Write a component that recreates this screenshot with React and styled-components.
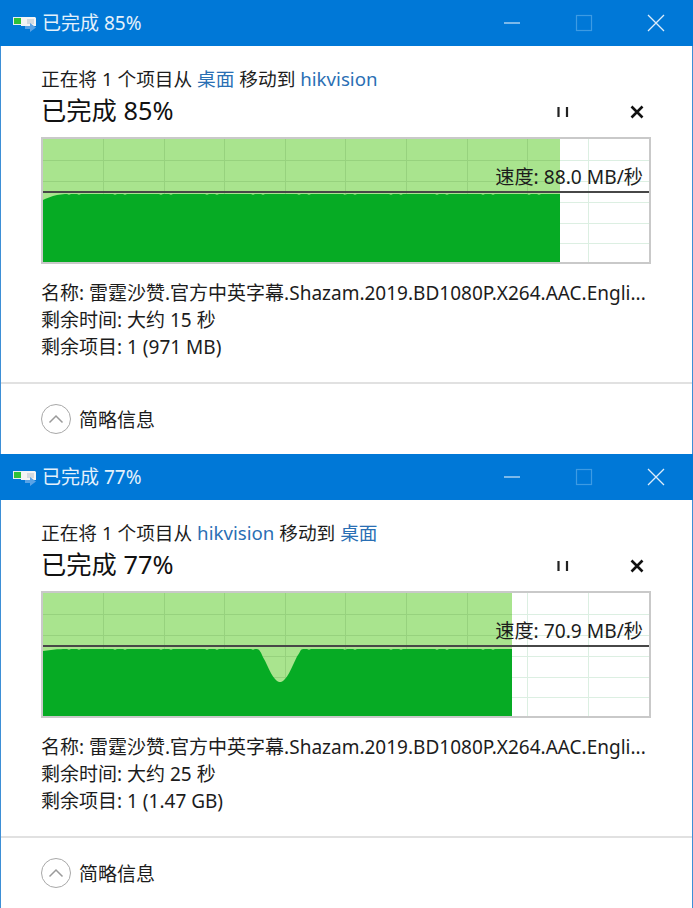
import React from "react";
import styled, { createGlobalStyle } from "styled-components";

const Global = createGlobalStyle`
  html, body { margin: 0; padding: 0; background: #fff; }
  * { box-sizing: border-box; }
  body { font-family: "Noto Sans", "Noto Sans CJK SC", sans-serif; color: #1c1c1c; }
`;

const Page = styled.div`
  width: 693px;
  display: flex;
  flex-direction: column;
`;

const Win = styled.section`
  height: 454px;
  display: flex;
  flex-direction: column;
  border-left: 1px solid #3d8fd6;
  border-right: 1px solid #3d8fd6;
`;

const TitleBar = styled.header`
  height: 46px;
  margin: 0 -1px;
  flex: none;
  display: flex;
  align-items: center;
  background: #0078d7;
  color: #e4f1fb;
  padding-left: 13px;
  font-size: 19px;
`;

const TitleText = styled.span`
  margin-left: 5px;
  margin-top: -2px;
  flex: 1;
`;

const CtrlButton = styled.div`
  width: 72px;
  height: 46px;
  display: flex;
  align-items: center;
  justify-content: center;
`;

const Controls = styled.div`
  display: flex;
  margin-right: 1px;
`;

const Body = styled.div`
  flex: 1;
  display: flex;
  flex-direction: column;
  padding: 19px 41px 0 40px;
`;

const Line = styled.div`
  font-size: 19px;
  line-height: 27px;
  height: 27px;
  white-space: nowrap;
`;

const Summary = styled(Line)`
  font-size: 18.7px;
`;

const Place = styled.span`
  color: #2a6fb4;
`;

const HeadRow = styled.div`
  margin-top: -1px;
  height: 36px;
  display: flex;
  align-items: center;
  justify-content: space-between;
`;

const Heading = styled.h1`
  margin: 0;
  font-size: 25.3px;
  font-weight: 400;
  color: #111;
`;

const Actions = styled.div`
  display: flex;
  gap: 50px;
  margin-right: 2px;
  padding-top: 5px;
`;

const Action = styled.div`
  width: 24px;
  height: 24px;
  display: flex;
  align-items: center;
  justify-content: center;
`;

const Chart = styled.div`
  position: relative;
  margin-top: 10px;
  width: 610px;
  height: 127px;
  border: 2px solid #c9c9c9;
  background: #fff;
`;

const ChartSvg = styled.svg`
  display: block;
`;

const SpeedLine = styled.div`
  position: absolute;
  left: 0;
  right: 0;
  top: ${(p) => p.$top}px;
  height: 2px;
  background: #474747;
`;

const SpeedLabel = styled.div`
  position: absolute;
  right: 6px;
  top: ${(p) => p.$top}px;
  font-size: 19.2px;
  line-height: 26px;
  color: #1c1c1c;
  white-space: nowrap;
`;

const Details = styled.div`
  margin-top: 16px;
  display: flex;
  flex-direction: column;
`;

const Footer = styled.div`
  height: 72px;
  flex: none;
  border-top: 2px solid #e1e1e1;
  display: flex;
  align-items: center;
  padding-left: 40px;
  gap: 8px;
`;

const FooterLabel = styled.span`
  font-size: 19px;
`;

const Toggle = styled.div`
  width: 30px;
  height: 30px;
  border: 1.5px solid #a8a8a8;
  border-radius: 50%;
  display: flex;
  align-items: center;
  justify-content: center;
  background: #fff;
`;

const AppIcon = () => (
  <svg width="24" height="18" viewBox="0 0 24 18">
    <rect x="0" y="3" width="10" height="8" fill="#e8eef0" />
    <rect x="1" y="4" width="7" height="6" fill="#2fc13a" />
    <path d="M8 3h14l1 1v8H8z" fill="#f4f4f4" />
    <path d="M14 5h7v5h-7z" fill="#d3dae0" />
    <path d="M12 12h5V9l6 4.5-6 4.5v-3h-5z" fill="#5aa3e6" />
  </svg>
);

const Minimize = () => (
  <svg width="18" height="18" viewBox="0 0 18 18">
    <path d="M1 9h16" stroke="#cfe5f7" strokeWidth="1.2" />
  </svg>
);
const Maximize = () => (
  <svg width="18" height="18" viewBox="0 0 18 18">
    <rect x="1.5" y="1.5" width="15" height="15" fill="none" stroke="#3d9be3" strokeWidth="1.2" />
  </svg>
);
const CloseWin = () => (
  <svg width="18" height="18" viewBox="0 0 18 18">
    <path d="M1 1l16 16M17 1L1 17" stroke="#dcedfb" strokeWidth="1.3" />
  </svg>
);
const Pause = () => (
  <svg width="14" height="14" viewBox="0 0 14 14">
    <path d="M2.5 2v10M11 2v10" stroke="#222" strokeWidth="2.2" />
  </svg>
);
const Stop = () => (
  <svg width="14" height="14" viewBox="0 0 14 14">
    <path d="M1.5 1.5l11 11M12.5 1.5l-11 11" stroke="#111" strokeWidth="2.6" />
  </svg>
);
const Chevron = () => (
  <svg width="16" height="10" viewBox="0 0 16 10">
    <path d="M1.5 8.5L8 2l6.5 6.5" fill="none" stroke="#9a9a9a" strokeWidth="1.5" />
  </svg>
);

const W = 606;
const H = 123;
const vLines = [60, 121, 181, 242, 302, 363, 424, 484, 545];
const hLines = [21, 42, 63, 84, 104];

function wave(end, base, start, dip) {
  const pts = [[0, H]];
  for (let x = 0; x <= end; x += 2) {
    const noise = (x * 7) % 23 > 20 ? 0.7 : 0;
    let y = base + noise;
    if (x < 24) y += start * Math.pow(1 - x / 24, 2);
    if (dip) {
      const d = Math.abs(x - dip.x) / dip.w;
      if (d < 1) y += dip.d * Math.pow(Math.cos((d * Math.PI) / 2), 1.4);
    }
    pts.push([x, y]);
  }
  pts.push([end, base], [end, H]);
  return pts.map((p) => p.join(",")).join(" ");
}

const Graph = ({ end, base, start, dip }) => (
  <ChartSvg width={W} height={H} viewBox={`0 0 ${W} ${H}`}>
    {vLines.map((x) => (
      <rect key={x} x={x} y="0" width="1" height={H} fill="#dcefe2" />
    ))}
    {hLines.map((y) => (
      <rect key={y} x="0" y={y} width={W} height="1" fill="#dcefe2" />
    ))}
    <rect x="0" y="0" width={end} height={H} fill="#a9e48e" />
    {vLines.filter((x) => x < end).map((x) => (
      <rect key={x} x={x} y="0" width="1" height={H} fill="#97d27e" />
    ))}
    {hLines.map((y) => (
      <rect key={y} x="0" y={y} width={end} height="1" fill="#97d27e" />
    ))}
    <polygon points={wave(end, base, start, dip)} fill="#06ab24" />
  </ChartSvg>
);

const DATA = [
  {
    pct: "85%",
    from: "桌面",
    to: "hikvision",
    speed: "88.0 MB/秒",
    end: 517,
    base: 55,
    start: 6,
    time: "大约 15 秒",
    items: "1 (971 MB)",
  },
  {
    pct: "77%",
    from: "hikvision",
    to: "桌面",
    speed: "70.9 MB/秒",
    end: 469,
    base: 56,
    start: 2,
    dip: { x: 237, w: 22, d: 33 },
    time: "大约 25 秒",
    items: "1 (1.47 GB)",
  },
];

const Transfer = ({ pct, from, to, speed, end, base, start, dip, time, items }) => (
  <Win>
    <TitleBar>
      <AppIcon />
      <TitleText>已完成 {pct}</TitleText>
      <Controls>
        <CtrlButton><Minimize /></CtrlButton>
        <CtrlButton><Maximize /></CtrlButton>
        <CtrlButton><CloseWin /></CtrlButton>
      </Controls>
    </TitleBar>
    <Body>
      <Summary>
        正在将 1 个项目从 <Place>{from}</Place> 移动到 <Place>{to}</Place>
      </Summary>
      <HeadRow>
        <Heading>已完成 {pct}</Heading>
        <Actions>
          <Action><Pause /></Action>
          <Action><Stop /></Action>
        </Actions>
      </HeadRow>
      <Chart>
        <Graph end={end} base={base} start={start} dip={dip} />
        <SpeedLine $top={52} />
        <SpeedLabel $top={25}>速度: {speed}</SpeedLabel>
      </Chart>
      <Details>
        <Line>名称: 雷霆沙赞.官方中英字幕.Shazam.2019.BD1080P.X264.AAC.Engli...</Line>
        <Line>剩余时间: {time}</Line>
        <Line>剩余项目: {items}</Line>
      </Details>
    </Body>
    <Footer>
      <Toggle><Chevron /></Toggle>
      <FooterLabel>简略信息</FooterLabel>
    </Footer>
  </Win>
);

export default function App() {
  return (
    <Page>
      <Global />
      {DATA.map((d) => (
        <Transfer key={d.pct} {...d} />
      ))}
    </Page>
  );
}
